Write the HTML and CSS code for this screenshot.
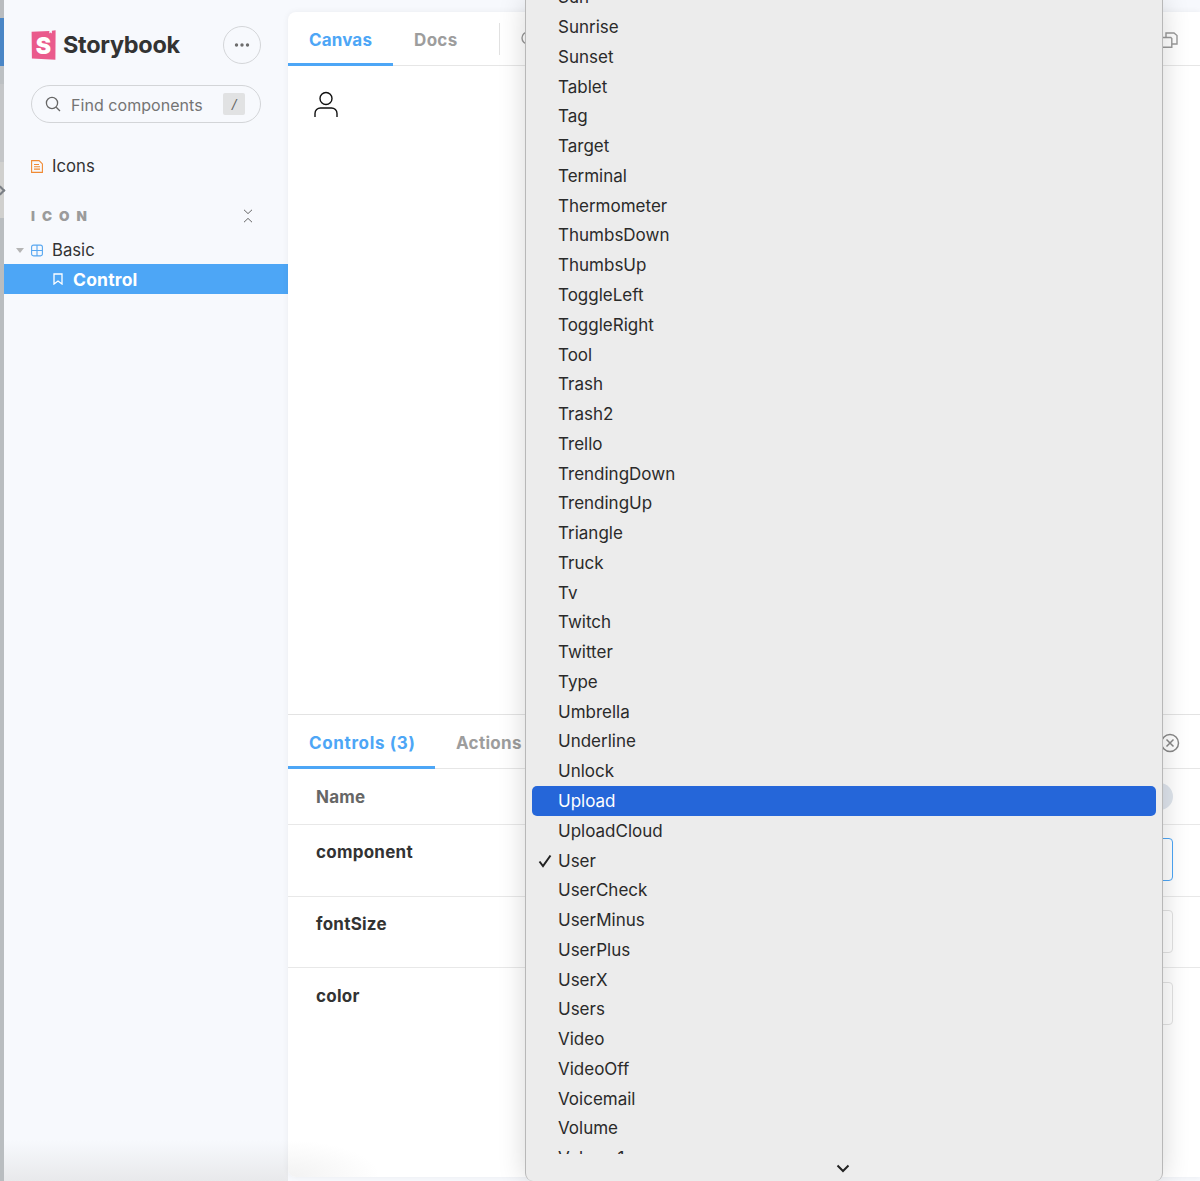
FILE: index.html
```html
<!DOCTYPE html>
<html lang="en">
<head>
<meta charset="utf-8">
<title>Storybook</title>
<link rel="stylesheet" href="styles.css">
</head>
<body>
<div class="app">
  <div class="edge"></div>
  <aside class="sidebar">
    <div class="brand">
      <svg class="logo" viewBox="0 0 25 30" aria-hidden="true">
        <path d="M.6 1.800 18.400.9l-.2 2.700 1.300-1 1.300.9.1-2.800L24.600.3 24.400 29.700.9 28.600z" fill="#ea5a8c"/>
        <text x="12.500" y="24" class="logo-s">S</text>
      </svg>
      <span class="wordmark">Storybook</span>
      <button class="more"><svg viewBox="0 0 16 4" aria-hidden="true"><circle cx="2.500" cy="2" r="1.700"/><circle cx="8" cy="2" r="1.700"/><circle cx="13.500" cy="2" r="1.700"/></svg></button>
    </div>
    <div class="search">
      <svg class="search-icon" viewBox="0 0 16 16" aria-hidden="true"><circle cx="7" cy="7" r="5.600"/><path d="m11.200 11.200 3.800 3.800"/></svg>
      <span class="search-text">Find components</span>
      <kbd class="slash">/</kbd>
    </div>
    <div class="nav-item top-item">
      <svg class="nav-icon" viewBox="0 0 12 13" aria-hidden="true"><path class="doc" d="M.6.600h7.500l3.300 3.300v8.500H.6z"/><path class="doc" d="M3 4.500h5M3 6.800h6M3 9.100h6"/></svg>
      <span>Icons</span>
    </div>
    <div class="section-head">
      <span class="section-title">ICON</span>
      <svg class="collapse" viewBox="0 0 10 14" aria-hidden="true"><path d="m1 .8 4 3.800 4-3.800M1 13.200l4-3.800 4 3.800"/></svg>
    </div>
    <div class="nav-item group">
      <span class="caret"></span>
      <svg class="nav-icon" viewBox="0 0 12 12" aria-hidden="true"><rect class="grid" x=".6" y=".6" width="10.800" height="10.800" rx="2"/><path class="grid" d="M6 .6v10.800M.6 6h10.800"/></svg>
      <span>Basic</span>
    </div>
    <div class="nav-item selected">
      <svg class="bookmark" viewBox="0 0 10 12" aria-hidden="true"><path d="M1 1h8v10L5 8l-4 3z"/></svg>
      <span>Control</span>
    </div>
  </aside>

  <main class="panel">
    <header class="tabs canvas-tabs">
      <div class="tab active">Canvas</div>
      <div class="tab">Docs</div>
      <div class="tab-sep"></div>
      <svg class="zoom-icon" viewBox="0 0 16 16" aria-hidden="true"><circle cx="7" cy="7" r="6"/><path d="m11.500 11.500 3.500 3.500"/></svg>
      <svg class="copy-icon" viewBox="0 0 17 16" aria-hidden="true"><path d="M.8 5.500h9l1 1v8.700H.8z"/><path d="M5 5.300V1h8l3 2.500V12h-5"/></svg>
    </header>
    <section class="stage">
      <svg class="user-icon" viewBox="0 0 24 27" aria-hidden="true"><circle cx="12" cy="7.500" r="6"/><path d="M1 26v-3.500A5.500 5.500 0 0 1 6.500 17h11a5.500 5.500 0 0 1 5.500 5.500V26"/></svg>
    </section>
    <section class="addons">
      <div class="tabs addon-tabs">
        <div class="tab active wide">Controls (3)</div>
        <div class="tab">Actions</div>
        <svg class="close-icon" viewBox="0 0 20 20" aria-hidden="true"><circle cx="10" cy="10" r="8.500"/><path d="m6.500 6.500 7 7M13.500 6.500l-7 7"/></svg>
      </div>
      <div class="row head-row"><span class="row-name">Name</span><span class="reset"></span></div>
      <div class="row"><span class="row-name strong">component</span><span class="field focus"></span></div>
      <div class="row"><span class="row-name strong">fontSize</span><span class="field"></span></div>
      <div class="row last"><span class="row-name strong">color</span><span class="field"></span></div>
    </section>
  </main>
</div>

<div class="menu">
  <ul class="menu-list">
    <li>Sun</li><li>Sunrise</li><li>Sunset</li><li>Tablet</li><li>Tag</li><li>Target</li><li>Terminal</li><li>Thermometer</li><li>ThumbsDown</li><li>ThumbsUp</li><li>ToggleLeft</li><li>ToggleRight</li><li>Tool</li><li>Trash</li><li>Trash2</li><li>Trello</li><li>TrendingDown</li><li>TrendingUp</li><li>Triangle</li><li>Truck</li><li>Tv</li><li>Twitch</li><li>Twitter</li><li>Type</li><li>Umbrella</li><li>Underline</li><li>Unlock</li>
    <li class="hover">Upload</li>
    <li>UploadCloud</li>
    <li class="checked"><svg class="check" viewBox="0 0 14 14" aria-hidden="true"><path d="m1.500 7.500 3.500 4.500 7.500-10.500"/></svg>User</li>
    <li>UserCheck</li><li>UserMinus</li><li>UserPlus</li><li>UserX</li><li>Users</li><li>Video</li><li>VideoOff</li><li>Voicemail</li><li>Volume</li><li>Volume1</li>
  </ul>
  <div class="menu-foot"><svg class="chev" viewBox="0 0 14 9" aria-hidden="true"><path d="m1.500 1.500 5.500 5.500 5.500-5.500"/></svg></div>
</div>
</body>
</html>
```

FILE: styles.css
```css
* { box-sizing: border-box; }
html, body { margin: 0; height: 1181px; overflow: hidden; }
body { font-family: Inter, "Liberation Sans", sans-serif; color: #333; background: #f7f9fd; position: relative; }
svg { display: block; }

.app { display: grid; grid-template-columns: 4px 284px 1fr; height: 1181px; }

.edge { position: relative; background: linear-gradient(#b9bcbf 0 18px, #4a86c6 18px 66px, #bcc0c3 66px 84px, #c4c6c8 84px 162px, #d0d0ce 162px 218px, #b9bdc0 218px); }
.edge::after { content: ""; position: absolute; left: -3px; top: 187px; width: 5px; height: 5px; border: solid #7a7f85; border-width: 2px 2px 0 0; transform: rotate(45deg); }

.sidebar { background: linear-gradient(#f7f9fd 0 1140px, #e8e9eb 1181px); display: flex; flex-direction: column; }

.brand { display: flex; align-items: center; height: 38px; margin: 26px 0 0 27px; width: 230px; }
.logo { width: 25px; height: 30px; flex: none; margin-top: -1px; }
.logo-s { font-family: Inter, sans-serif; font-size: 23px; font-weight: 900; fill: #fff; text-anchor: middle; }
.wordmark { font-size: 23.500px; font-weight: 700; color: #333; margin: -2px 0 0 7px; letter-spacing: -.3px; }
.more { margin-left: auto; width: 38px; height: 38px; padding: 0; border-radius: 50%; border: 1px solid #d4d6d9; background: transparent; display: flex; align-items: center; justify-content: center; }
.more svg { width: 16px; height: 4px; fill: #6d6d6d; }

.search { display: flex; align-items: center; height: 38px; width: 230px; margin: 21px 0 0 27px; border: 1px solid #d3d5d8; border-radius: 19px; padding: 0 15px 0 13px; }
.search-icon { width: 16px; height: 16px; fill: none; stroke: #666; stroke-width: 1.300; flex: none; }
.search-text { font-size: 16px; color: #747474; margin: 2px 0 0 10px; letter-spacing: .05px; white-space: nowrap; }
.slash { margin-left: auto; width: 22px; height: 22px; background: #e1e2e3; border-radius: 2px; font: italic 15px "Liberation Sans", sans-serif; color: #666; display: flex; align-items: center; justify-content: center; }

.nav-item { display: flex; align-items: center; height: 30px; font-size: 16.700px; color: #333; }
.nav-icon { width: 12px; height: 13px; flex: none; margin-right: 9px; }
.top-item { margin: 28px 0 0 27px; }
.doc { fill: none; stroke: #f08a33; stroke-width: 1.100; }
.grid { fill: none; stroke: #58a7f0; stroke-width: 1.100; }

.section-head { display: flex; align-items: center; justify-content: space-between; margin: 20px 35px 0 27px; height: 30px; }
.section-title { font-size: 13.500px; font-weight: 900; letter-spacing: 7px; color: #9b9b9b; }
.collapse { width: 10px; height: 14px; fill: none; stroke: #666; stroke-width: 1; }

.group { margin-top: 4px; padding-left: 12px; height: 30px; }
.caret { width: 0; height: 0; border: 4px solid transparent; border-top: 5px solid #b5b5b5; border-bottom: 0; margin-right: 7px; }
.selected { background: #4da6f6; color: #fff; font-weight: 700; font-size: 17.500px; letter-spacing: .2px; padding-left: 49px; height: 30px; margin-top: -1px; }
.bookmark { width: 10px; height: 12px; margin-right: 10px; fill: none; stroke: #fff; stroke-width: 1.300; }

.panel { margin: 12px 0 4px; background: #fff; border-radius: 8px 0 0 8px; box-shadow: 0 0 6px rgba(0,0,0,.06); display: flex; flex-direction: column; position: relative; }
.panel::after { content: ""; position: absolute; left: 0; bottom: 0; width: 90px; height: 36px; background: radial-gradient(ellipse at 0 100%, #f2f2f2, rgba(255,255,255,0) 72%); border-radius: 0 0 0 8px; }

.tabs { display: flex; align-items: center; border-bottom: 1px solid #e6e6e6; position: relative; }
.canvas-tabs { height: 54px; flex: none; }
.addon-tabs { height: 55px; border-top: 1px solid #e3e3e3; }
.tab { height: 100%; padding: 2px 21px 0; display: flex; align-items: center; font-size: 17px; font-weight: 700; color: #9d9d9d; letter-spacing: .3px; margin-bottom: -1px; white-space: nowrap; }
.tab.active { color: #4da6f6; border-bottom: 3px solid #4da6f6; padding-top: 5px; letter-spacing: .15px; }
.addon-tabs .tab.wide { width: 147px; letter-spacing: .65px; }
.tab-sep { width: 1px; height: 32px; background: #e2e2e2; margin-left: 20px; }
.zoom-icon { width: 16px; height: 16px; margin-left: 21px; fill: none; stroke: #999; stroke-width: 1.400; }
.copy-icon { width: 17px; height: 16px; position: absolute; left: 873px; top: 20px; fill: none; stroke: #999; stroke-width: 1.400; }

.stage { flex: 1; padding: 25px 0 0 26px; }
.user-icon { width: 24px; height: 27px; fill: none; stroke: #111; stroke-width: 1.400; }

.addons { flex: none; height: 463px; }
.close-icon { position: absolute; left: 872px; top: 18px; width: 20px; height: 20px; fill: none; stroke: #888; stroke-width: 1.500; }

.row { display: flex; justify-content: space-between; align-items: flex-start; height: 71.500px; padding: 13px 27px 0 28px; border-bottom: 1px solid #e8e8e8; position: relative; }
.row.last { border-bottom: 0; padding-top: 14px; }
.head-row { height: 56px; align-items: center; padding-top: 0; }
.row-name { font-size: 17px; font-weight: 700; color: #333; letter-spacing: .25px; margin-top: 4px; }
.head-row .row-name { color: #666; margin-top: 0; }
.reset { width: 27px; height: 27px; border-radius: 50%; background: #dfe5ed; }
.field { width: 300px; height: 43px; border: 1px solid #e2e2e2; border-radius: 4px; }
.field.focus { border-color: #4da6f6; }

.menu { position: absolute; left: 525px; top: 0; width: 638px; height: 1181px; background: #ececec; border: 1px solid #b8b8b8; border-width: 0 1px; border-radius: 0 0 8px 8px; box-shadow: 0 0 28px rgba(0,0,0,.16); display: flex; flex-direction: column; }
.menu-list { list-style: none; margin: 0; padding: 0 6px; height: 1154px; overflow: hidden; flex: none; }
.menu-list li { height: 29.780px; line-height: 29.780px; padding: 1px 0 0 26px; font-size: 17px; color: #2a2a2a; position: relative; white-space: nowrap; }
.menu-list li:first-child { margin-top: -17.700px; }
.menu-list li.hover { background: #2566d9; color: #fff; border-radius: 5px; }
.check { position: absolute; left: 6px; top: 8px; width: 14px; height: 14px; fill: none; stroke: #222; stroke-width: 2; }
.menu-foot { flex: 1; display: flex; justify-content: center; padding: 10px 2px 0 0; }
.chev { width: 14px; height: 9px; fill: none; stroke: #222; stroke-width: 2; }
```
